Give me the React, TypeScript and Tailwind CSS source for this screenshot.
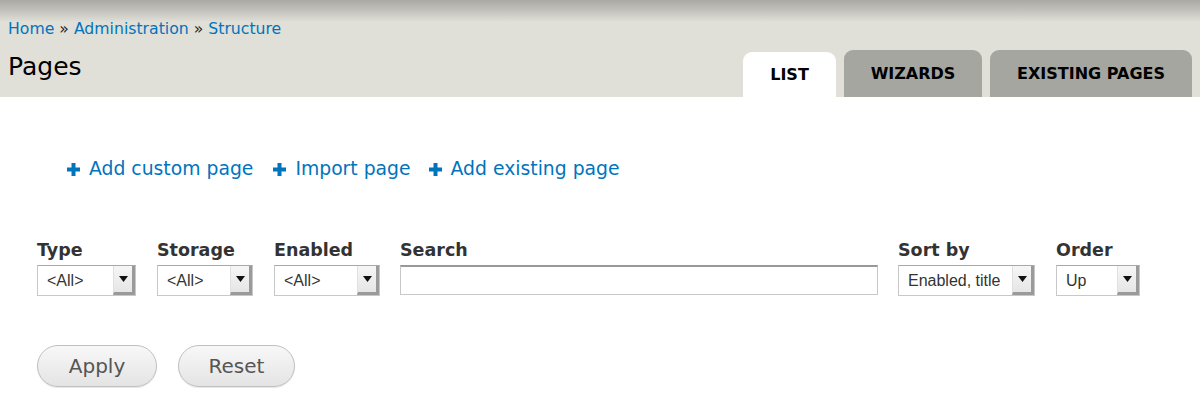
import React from "react";

const font = { fontFamily: '"DejaVu Sans", Verdana, sans-serif' };

function Select({ value, w }: { value: string; w: string }) {
  return (
    <div className={`flex h-[31px] ${w} border border-[#c8c8c8] border-t-[#a8a8a8] bg-white`}>
      <div
        className="flex flex-1 items-center pl-[9px] text-[16px] text-[#333]"
        style={{ fontFamily: '"Liberation Sans", Arial, sans-serif' }}
      >
        {value}
      </div>
      <div className="flex w-[22px] items-center justify-center bg-gradient-to-b from-[#f6f6f6] to-[#e6e6e6] border-r-[3px] border-b-[3px] border-r-[#9a9a9a] border-b-[#9a9a9a] border-l border-l-[#e0e0e0]">
        <svg width="9" height="6" viewBox="0 0 9 6">
          <path d="M0 0 H9 L4.5 6 Z" fill="#111" />
        </svg>
      </div>
    </div>
  );
}

function Field({ label, children, ml }: { label: string; children: React.ReactNode; ml: string }) {
  return (
    <div className={`flex flex-col ${ml}`}>
      <div className="mb-[3px] text-[17.5px] font-bold leading-[24px] text-[#333]">{label}</div>
      {children}
    </div>
  );
}

function Plus() {
  return (
    <svg width="13" height="13" viewBox="0 0 13 13" className="mr-[9px]">
      <path d="M4.5 0 H8.5 V4.5 H13 V8.5 H8.5 V13 H4.5 V8.5 H0 V4.5 H4.5 Z" fill="#0074bd" />
    </svg>
  );
}

export default function App() {
  return (
    <div className="h-[393px] w-[1200px] overflow-hidden bg-white" style={font}>
      <div className="relative h-[97px] bg-[#e0dfd8]">
        <div className="absolute inset-x-0 top-0 h-[22px] bg-gradient-to-b from-[#a9a8a3] to-[#e0dfd8]" />
        <div className="relative flex h-full items-end justify-between">
          <div className="flex h-full flex-col pl-[8px] pt-[18px]">
            <div className="text-[15.7px] leading-[22px] text-[#0074bd]">
              <span>Home</span>
              <span className="text-[#222]"> » </span>
              <span>Administration</span>
              <span className="text-[#222]"> » </span>
              <span>Structure</span>
            </div>
            <div className="mt-[12px] text-[25px] leading-[30px] text-black">Pages</div>
          </div>
          <div className="flex items-end gap-[8px] pr-[8px]">
            <div className="flex h-[45px] w-[93px] items-center justify-center rounded-t-[9px] bg-white text-[16px] font-bold text-black">
              LIST
            </div>
            <div className="flex h-[47px] w-[138px] items-center justify-center rounded-t-[9px] bg-[#a6a6a0] text-[16px] font-bold text-black">
              WIZARDS
            </div>
            <div className="flex h-[47px] w-[202px] items-center justify-center rounded-t-[9px] bg-[#a6a6a0] text-[16px] font-bold text-black">
              EXISTING PAGES
            </div>
          </div>
        </div>
      </div>

      <div className="flex items-center pl-[67px] pt-[59px] text-[18.8px] leading-[26px] text-[#0074bd]">
        <div className="flex items-center"><Plus />Add custom page</div>
        <div className="ml-[20px] flex items-center"><Plus />Import page</div>
        <div className="ml-[18px] flex items-center"><Plus />Add existing page</div>
      </div>

      <div className="flex pl-[37px] pt-[56px]">
        <Field label="Type" ml=""><Select value="<All>" w="w-[99px]" /></Field>
        <Field label="Storage" ml="ml-[21px]"><Select value="<All>" w="w-[96px]" /></Field>
        <Field label="Enabled" ml="ml-[21px]"><Select value="<All>" w="w-[106px]" /></Field>
        <Field label="Search" ml="ml-[20px]">
          <div className="h-[30px] w-[478px] border border-[#c8c8c8] border-t-[#999] border-t-2 bg-white" />
        </Field>
        <Field label="Sort by" ml="ml-[20px]"><Select value="Enabled, title" w="w-[137px]" /></Field>
        <Field label="Order" ml="ml-[21px]"><Select value="Up" w="w-[84px]" /></Field>
      </div>

      <div className="flex pl-[37px] pt-[49px]">
        <button className="h-[42px] w-[120px] rounded-full border border-[#c0c0c0] bg-gradient-to-b from-[#f8f8f8] to-[#e4e4e4] text-[20px] text-[#555] shadow-[0_1px_1px_rgba(0,0,0,0.1)]">
          Apply
        </button>
        <button className="ml-[21px] h-[42px] w-[117px] rounded-full border border-[#c0c0c0] bg-gradient-to-b from-[#f8f8f8] to-[#e4e4e4] text-[20px] text-[#555] shadow-[0_1px_1px_rgba(0,0,0,0.1)]">
          Reset
        </button>
      </div>
    </div>
  );
}
